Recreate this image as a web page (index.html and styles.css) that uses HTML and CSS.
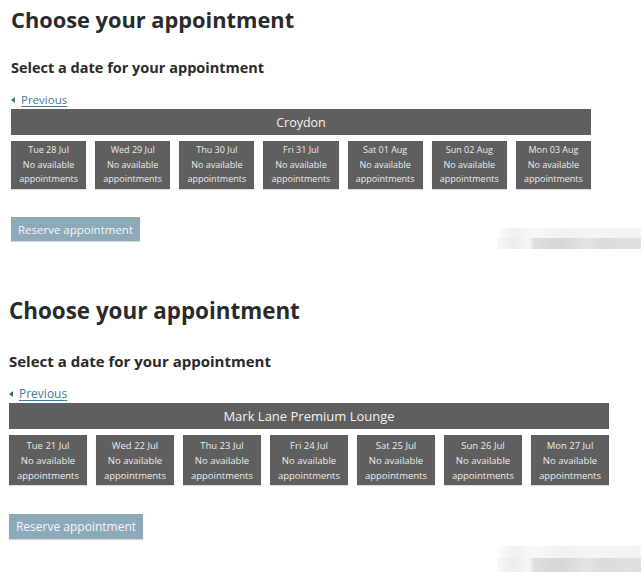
FILE: index.html
```html
<!DOCTYPE html>
<html lang="en">
<head>
<meta charset="utf-8">
<title>Choose your appointment</title>
<link rel="stylesheet" href="styles.css">
</head>
<body>
<section class="booking b1">
  <h1 class="title">Choose your appointment</h1>
  <h2 class="subtitle">Select a date for your appointment</h2>
  <a class="prev" href="#"><span class="tri"></span><span class="prev-text">Previous</span></a>
  <div class="location">Croydon</div>
  <div class="days">
    <div class="day"><span>Tue 28 Jul</span><span>No available</span><span>appointments</span></div>
    <div class="day"><span>Wed 29 Jul</span><span>No available</span><span>appointments</span></div>
    <div class="day"><span>Thu 30 Jul</span><span>No available</span><span>appointments</span></div>
    <div class="day"><span>Fri 31 Jul</span><span>No available</span><span>appointments</span></div>
    <div class="day"><span>Sat 01 Aug</span><span>No available</span><span>appointments</span></div>
    <div class="day"><span>Sun 02 Aug</span><span>No available</span><span>appointments</span></div>
    <div class="day"><span>Mon 03 Aug</span><span>No available</span><span>appointments</span></div>
  </div>
  <div class="actions">
    <button class="reserve" type="button">Reserve appointment</button>
    <div class="blur"><div class="blur-top"></div><div class="blur-bottom"></div></div>
  </div>
</section>
<section class="booking b2">
  <h1 class="title">Choose your appointment</h1>
  <h2 class="subtitle">Select a date for your appointment</h2>
  <a class="prev" href="#"><span class="tri"></span><span class="prev-text">Previous</span></a>
  <div class="location">Mark Lane Premium Lounge</div>
  <div class="days">
    <div class="day"><span>Tue 21 Jul</span><span>No available</span><span>appointments</span></div>
    <div class="day"><span>Wed 22 Jul</span><span>No available</span><span>appointments</span></div>
    <div class="day"><span>Thu 23 Jul</span><span>No available</span><span>appointments</span></div>
    <div class="day"><span>Fri 24 Jul</span><span>No available</span><span>appointments</span></div>
    <div class="day"><span>Sat 25 Jul</span><span>No available</span><span>appointments</span></div>
    <div class="day"><span>Sun 26 Jul</span><span>No available</span><span>appointments</span></div>
    <div class="day"><span>Mon 27 Jul</span><span>No available</span><span>appointments</span></div>
  </div>
  <div class="actions">
    <button class="reserve" type="button">Reserve appointment</button>
    <div class="blur"><div class="blur-top"></div><div class="blur-bottom"></div></div>
  </div>
</section>
</body>
</html>
```

FILE: styles.css
```css
* { box-sizing: border-box; }
html, body { margin: 0; padding: 0; background: #ffffff; }
body {
  font-family: "Open Sans", "Noto Sans", sans-serif;
  color: #2b2b2b;
  width: 644px;
  overflow: hidden;
}

.booking { display: flex; flex-direction: column; }

.title { margin: 0; font-weight: 700; color: #2a2a2a; }
.subtitle { margin: 0; font-weight: 700; color: #2a2a2a; }

.prev {
  display: flex;
  align-items: center;
  color: #3f7aa0;
  text-decoration: none;
}
.tri {
  width: 0; height: 0;
  border-top: 3px solid transparent;
  border-bottom: 3px solid transparent;
  border-right: 4px solid #3f6d8c;
}
.prev-text { text-decoration: underline; text-underline-offset: 2px; }

.location {
  background: #5f5f5f;
  color: #f2f2f2;
  text-align: center;
  display: flex;
  align-items: center;
  justify-content: center;
}

.days { display: grid; grid-template-columns: repeat(7, 1fr); }
.day {
  background: #5f5f5f;
  color: #ececec;
  display: flex;
  flex-direction: column;
  align-items: center;
  justify-content: center;
  box-shadow: 0 1px 1px rgba(0,0,0,0.12);
}

.actions { display: flex; justify-content: space-between; align-items: flex-start; }
.reserve {
  border: 0;
  background: #8eaab8;
  color: #f3f7f9;
  font-family: "Open Sans", "Noto Sans", sans-serif;
  padding: 0;
  box-shadow: 0 1px 1px rgba(0,0,0,0.15);
}

.blur { width: 144px; display: flex; flex-direction: column; }
.blur-top {
  height: 10px;
  background: linear-gradient(90deg, #ffffff 0%, #f6f6f6 6%, #f0f0f0 12%, #f8f8f8 25%, #f1f1f1 45%, #f5f5f5 70%, #f2f2f2 100%);
}
.blur-bottom {
  height: 11px;
  background: linear-gradient(90deg, #f7f7f7 0%, #ececec 12%, #f6f6f6 22%, #dedede 26%, #d6d6d6 42%, #dddddd 55%, #e4e4e4 62%, #dadada 75%, #e0e0e0 90%, #dcdcdc 100%);
}

/* ---- first block ---- */
.b1 { padding: 6px 0 0 11px; width: 641px; }
.b1 .title { font-size: 21.8px; line-height: 28px; }
.b1 .subtitle { font-size: 14.5px; line-height: 20px; margin-top: 24px; }
.b1 .prev { font-size: 11.5px; line-height: 16px; margin-top: 14px; gap: 6px; }
.b1 .location { width: 580px; height: 26px; font-size: 12.5px; margin-top: 1px; }
.b1 .days { width: 580px; column-gap: 9px; margin-top: 6px; }
.b1 .day { height: 48px; font-size: 9px; line-height: 14.5px; }
.b1 .actions { margin-top: 28px; }
.b1 .reserve { width: 129px; height: 24px; font-size: 11.5px; }
.b1 .blur { margin-top: 11px; }

/* ---- second block ---- */
.b2 { padding: 47px 0 0 9px; width: 641px; }
.b2 .title { font-size: 22.4px; line-height: 30px; }
.b2 .subtitle { font-size: 15px; line-height: 22px; margin-top: 24px; }
.b2 .prev { font-size: 12px; line-height: 16px; margin-top: 14px; gap: 6px; }
.b2 .location { width: 600px; height: 26px; font-size: 13px; margin-top: 1px; }
.b2 .days { width: 600px; column-gap: 9px; margin-top: 6px; }
.b2 .day { height: 50px; font-size: 9.5px; line-height: 15px; }
.b2 .actions { margin-top: 29px; }
.b2 .reserve { width: 134px; height: 25px; font-size: 12px; }
.b2 .blur { margin-top: 32px; height: 26px; }
.b2 .blur-top { height: 12px; }
.b2 .blur-bottom { height: 14px; }
```
